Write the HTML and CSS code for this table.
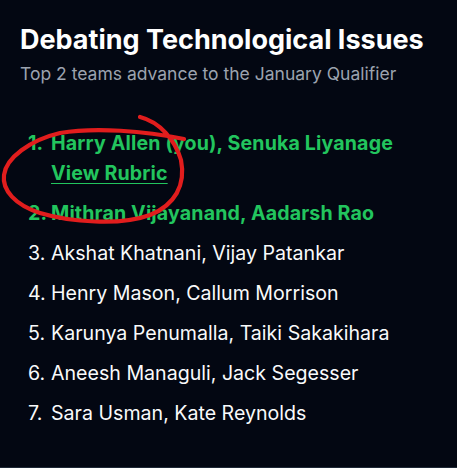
FILE: index.html
```html
<!DOCTYPE html>
<html lang="en">
<head>
<meta charset="utf-8">
<title>Debating Technological Issues</title>
<link rel="stylesheet" href="styles.css">
</head>
<body>
<main class="board">
  <header class="board-head">
    <h1 class="board-title">Debating Technological Issues</h1>
    <p class="board-sub">Top 2 teams advance to the January Qualifier</p>
  </header>
  <ol class="teams">
    <li class="team qualified">
      <span class="rank">1.</span>
      <div class="team-body">
        <span class="names">Harry Allen (you), Senuka Liyanage</span>
        <a class="rubric" href="#">View Rubric</a>
      </div>
    </li>
    <li class="team qualified">
      <span class="rank">2.</span>
      <div class="team-body"><span class="names">Mithran Vijayanand, Aadarsh Rao</span></div>
    </li>
    <li class="team">
      <span class="rank">3.</span>
      <div class="team-body"><span class="names">Akshat Khatnani, Vijay Patankar</span></div>
    </li>
    <li class="team">
      <span class="rank">4.</span>
      <div class="team-body"><span class="names">Henry Mason, Callum Morrison</span></div>
    </li>
    <li class="team">
      <span class="rank">5.</span>
      <div class="team-body"><span class="names">Karunya Penumalla, Taiki Sakakihara</span></div>
    </li>
    <li class="team">
      <span class="rank">6.</span>
      <div class="team-body"><span class="names">Aneesh Managuli, Jack Segesser</span></div>
    </li>
    <li class="team">
      <span class="rank">7.</span>
      <div class="team-body"><span class="names">Sara Usman, Kate Reynolds</span></div>
    </li>
  </ol>
  <svg class="annotation" width="200" height="240" viewBox="0 0 200 240" aria-hidden="true">
    <path d="M140,117 C160,122 175,140 181,160 C186,185 175,205 150,215 C120,226 70,222 40,213 C15,205 2,190 4,175 C6,158 30,140 60,133 C95,127 145,131 184,139" fill="none" stroke="#e11d1d" stroke-width="4.2" stroke-linecap="round" stroke-linejoin="round"/>
  </svg>
</main>
</body>
</html>
```

FILE: styles.css
```css
* { box-sizing: border-box; }

html, body {
  margin: 0;
  padding: 0;
  background: #030712;
}

body {
  font-family: Inter, "Noto Sans", "Liberation Sans", sans-serif;
  color: #f9fafb;
}

.board {
  position: relative;
  min-height: 468px;
  padding: 23px 20px 0 20px;
  border-bottom: 1px solid #1f2937;
}

.board-title {
  margin: 0;
  font-size: 27px;
  line-height: 34px;
  font-weight: 700;
  color: #ffffff;
}

.board-sub {
  margin: 5px 0 0 0;
  font-size: 17.5px;
  line-height: 24px;
  color: #9ca3af;
}

.teams {
  list-style: none;
  margin: 43px 0 0 0;
  padding: 0 0 0 8px;
  display: flex;
  flex-direction: column;
  gap: 12px;
}

.team {
  display: flex;
  font-size: 19.6px;
  line-height: 28px;
  color: #f9fafb;
}

.rank {
  flex: 0 0 23px;
}

.team-body {
  display: flex;
  flex-direction: column;
}

.team.qualified {
  color: #22c55e;
  font-weight: 700;
  letter-spacing: 0.15px;
}

.rubric {
  color: #22c55e;
  text-decoration: underline;
  text-underline-offset: 3px;
  margin-top: 2px;
}

.annotation {
  position: absolute;
  left: 0;
  top: 0;
  pointer-events: none;
}
```
